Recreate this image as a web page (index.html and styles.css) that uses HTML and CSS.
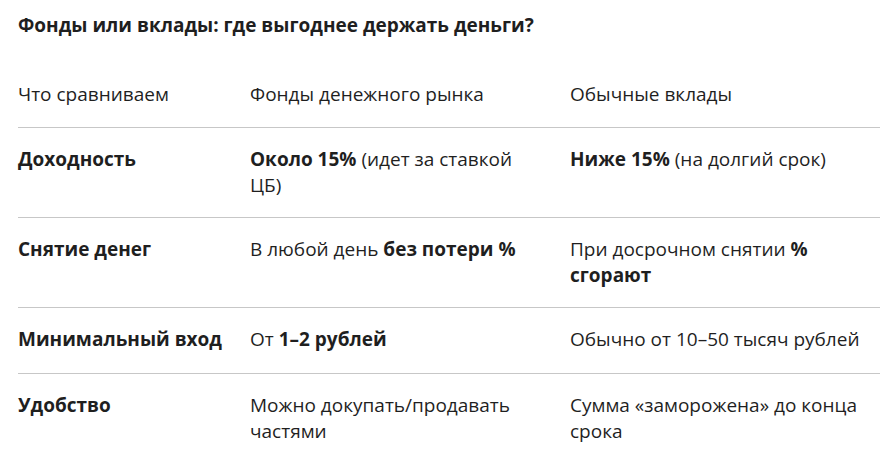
FILE: index.html
```html
<!DOCTYPE html>
<html lang="ru">
<head>
<meta charset="utf-8">
<link rel="stylesheet" href="styles.css">
</head>
<body>
<main class="page">
  <h2 class="title">Фонды или вклады: где выгоднее держать деньги?</h2>
  <div class="table">
    <div class="row head">
      <div class="cell">Что сравниваем</div>
      <div class="cell">Фонды денежного рынка</div>
      <div class="cell">Обычные вклады</div>
    </div>
    <div class="row">
      <div class="cell"><b>Доходность</b></div>
      <div class="cell"><b>Около 15%</b> (идет за ставкой ЦБ)</div>
      <div class="cell"><b>Ниже 15%</b> (на долгий срок)</div>
    </div>
    <div class="row">
      <div class="cell"><b>Снятие денег</b></div>
      <div class="cell">В любой день <b>без потери %</b></div>
      <div class="cell">При досрочном снятии <b>% сгорают</b></div>
    </div>
    <div class="row single">
      <div class="cell"><b>Минимальный вход</b></div>
      <div class="cell">От <b>1–2 рублей</b></div>
      <div class="cell">Обычно от 10–50 тысяч рублей</div>
    </div>
    <div class="row last">
      <div class="cell"><b>Удобство</b></div>
      <div class="cell">Можно докупать/продавать частями</div>
      <div class="cell">Сумма «заморожена» до конца срока</div>
    </div>
  </div>
</main>
</body>
</html>
```
FILE: styles.css
```css
html, body {
  margin: 0;
  padding: 0;
  background: #ffffff;
}
.page {
  padding: 12px 0 0 18px;
  font-family: "Open Sans", "Liberation Sans", sans-serif;
  color: #1f1f1f;
  font-size: 19px;
  line-height: 26px;
}
.title {
  margin: 0;
  font-size: 19px;
  font-weight: 700;
  line-height: 26px;
}
.table {
  margin-top: 43px;
  width: 862px;
}
.row {
  display: grid;
  grid-template-columns: 232px 320px 310px;
  padding: 18px 0 19px;
  border-bottom: 1px solid #c7c7c7;
}
.row.head {
  padding-top: 0;
  padding-bottom: 20px;
}
.row.single {
  padding-bottom: 21px;
}
.row.last {
  border-bottom: none;
}
.cell {
  padding-right: 10px;
}
.cell:nth-child(2) {
  padding-right: 30px;
}
.cell b {
  font-weight: 700;
}
```
